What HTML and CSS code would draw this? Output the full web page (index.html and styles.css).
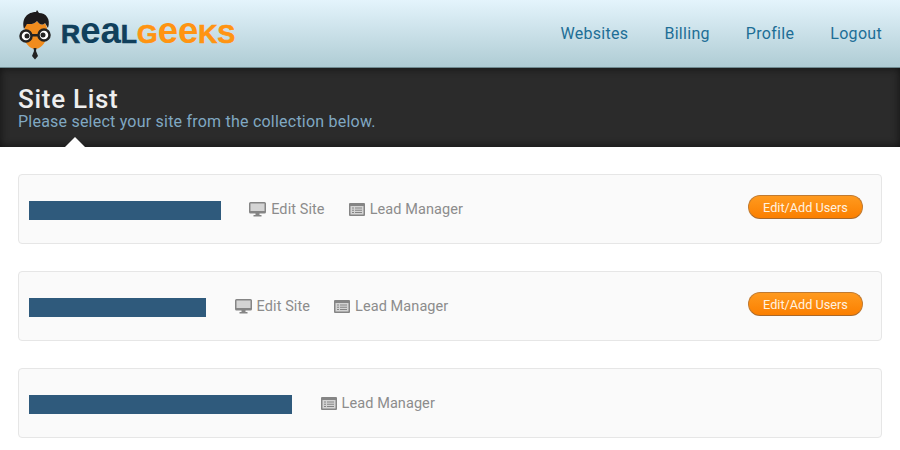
FILE: index.html
```html
<!DOCTYPE html>
<html lang="en">
<head>
  <meta charset="UTF-8">
  <title>Site List</title>
  <link rel="stylesheet" href="styles.css">
</head>
<body>

  <header class="topbar">
    <a class="logo" href="#">
      <svg class="logo-mark" width="34" height="50" viewBox="0 0 34 50">
        <path d="M6 16 L8 14 C10 14 15 15 18 11 C20 14 23 16 26 13 L28 18 L27 30 C24 36 20 39 16 39 C12 39 8 35 5 30 Z" fill="#f08c1e"/>
        <path d="M5 19 C2 8 9 2 17 2 L18 0 L20 3 C27 3 32 9 29 18 L26 13 C23 16 20 14 18 11 C15 15 10 14 8 14 Z" fill="#1d1b1c"/>
        <rect x="11" y="24" width="10" height="2.500" fill="#222"/>
        <circle cx="7" cy="26" r="5.500" fill="#fff" stroke="#222" stroke-width="2.500"/>
        <circle cx="25" cy="25" r="5.500" fill="#fff" stroke="#222" stroke-width="2.500"/>
        <circle cx="8" cy="26" r="2.500" fill="#222"/>
        <circle cx="24" cy="25" r="2.500" fill="#222"/>
        <path d="M14.500 38 L17.500 38 L17 41 L19 46 L16 49.500 L13 46 L15 41 Z" fill="#222"/>
      </svg>
      <span class="logo-text"><span class="logo-cap">R</span>ea<span class="logo-cap">L</span><span class="logo-accent"><span class="logo-cap">G</span>ee<span class="logo-cap">KS</span></span></span>
    </a>
    <nav class="nav">
      <a href="#">Websites</a>
      <a href="#">Billing</a>
      <a href="#">Profile</a>
      <a href="#">Logout</a>
    </nav>
  </header>

  <section class="banner">
    <h1>Site List</h1>
    <p>Please select your site from the collection below.</p>
    <span class="banner-arrow"></span>
  </section>

  <main class="sites">
    <div class="site">
      <span class="site-name" style="width: 192px"></span>
      <a class="site-link" href="#">
        <svg class="icon" width="17" height="15" viewBox="0 0 17 15"><rect x="1" y="1" width="15" height="9" fill="#d4d4d4"/><path d="M1.500 0H15.500A1.500 1.500 0 0 1 17 1.500V10A1.500 1.500 0 0 1 15.500 11.500H1.500A1.500 1.500 0 0 1 0 10V1.500A1.500 1.500 0 0 1 1.500 0ZM1.500 1.500V9H15.500V1.500ZM6.500 11.500H10.500V13H12.500V14.500H4.500V13H6.500Z" fill-rule="evenodd"/></svg>
        Edit Site
      </a>
      <a class="site-link" href="#">
        <svg class="icon" width="16" height="13" viewBox="0 0 16 13"><rect x="1" y="3" width="14" height="9" fill="#d4d4d4"/><path d="M1 0H15A1 1 0 0 1 16 1V12A1 1 0 0 1 15 13H1A1 1 0 0 1 0 12V1A1 1 0 0 1 1 0ZM1.500 3V11.500H14.500V3ZM3 4.500H5V5.500H3ZM6 4.500H13V5.500H6ZM3 6.750H5V7.750H3ZM6 6.750H13V7.750H6ZM3 9H5V10H3ZM6 9H13V10H6Z" fill-rule="evenodd"/></svg>
        Lead Manager
      </a>
      <a class="users-btn" href="#">Edit/Add Users</a>
    </div>

    <div class="site">
      <span class="site-name" style="width: 177.400px"></span>
      <a class="site-link" href="#">
        <svg class="icon" width="17" height="15" viewBox="0 0 17 15"><rect x="1" y="1" width="15" height="9" fill="#d4d4d4"/><path d="M1.500 0H15.500A1.500 1.500 0 0 1 17 1.500V10A1.500 1.500 0 0 1 15.500 11.500H1.500A1.500 1.500 0 0 1 0 10V1.500A1.500 1.500 0 0 1 1.500 0ZM1.500 1.500V9H15.500V1.500ZM6.500 11.500H10.500V13H12.500V14.500H4.500V13H6.500Z" fill-rule="evenodd"/></svg>
        Edit Site
      </a>
      <a class="site-link" href="#">
        <svg class="icon" width="16" height="13" viewBox="0 0 16 13"><rect x="1" y="3" width="14" height="9" fill="#d4d4d4"/><path d="M1 0H15A1 1 0 0 1 16 1V12A1 1 0 0 1 15 13H1A1 1 0 0 1 0 12V1A1 1 0 0 1 1 0ZM1.500 3V11.500H14.500V3ZM3 4.500H5V5.500H3ZM6 4.500H13V5.500H6ZM3 6.750H5V7.750H3ZM6 6.750H13V7.750H6ZM3 9H5V10H3ZM6 9H13V10H6Z" fill-rule="evenodd"/></svg>
        Lead Manager
      </a>
      <a class="users-btn" href="#">Edit/Add Users</a>
    </div>

    <div class="site">
      <span class="site-name" style="width: 263.400px"></span>
      <a class="site-link" href="#">
        <svg class="icon" width="16" height="13" viewBox="0 0 16 13"><rect x="1" y="3" width="14" height="9" fill="#d4d4d4"/><path d="M1 0H15A1 1 0 0 1 16 1V12A1 1 0 0 1 15 13H1A1 1 0 0 1 0 12V1A1 1 0 0 1 1 0ZM1.500 3V11.500H14.500V3ZM3 4.500H5V5.500H3ZM6 4.500H13V5.500H6ZM3 6.750H5V7.750H3ZM6 6.750H13V7.750H6ZM3 9H5V10H3ZM6 9H13V10H6Z" fill-rule="evenodd"/></svg>
        Lead Manager
      </a>
    </div>
  </main>

</body>
</html>
```

FILE: styles.css
```css
html, body {
  height: 450px;
  overflow: hidden;
}

body {
  margin: 0;
  background: #fff;
  font-family: Roboto, Arial, sans-serif;
}

a {
  text-decoration: none;
}

.topbar {
  height: 67px;
  padding: 0 18px;
  display: flex;
  justify-content: space-between;
  align-items: center;
  background: linear-gradient(#e4f4fc, #afccd4);
  border-bottom: 1px solid #6f8a90;
}

.logo {
  display: flex;
  align-items: center;
  gap: 8px;
  margin-left: 1px;
}

.logo-mark {
  display: block;
  margin-top: 2px;
}

.logo-text {
  margin-top: -2px;
  font-family: "Liberation Sans", Arial, sans-serif;
  font-weight: 700;
  font-size: 36.600px;
  line-height: 40px;
  color: #10405c;
}

.logo-cap {
  font-size: 26.500px;
  -webkit-text-stroke: 0.7px currentColor;
}

.logo-accent {
  color: #ff9412;
}

.nav {
  display: flex;
  gap: 36px;
  margin-top: -1px;
}

.nav a {
  color: #1d6e96;
  font-size: 16px;
  letter-spacing: 0.3px;
}

.banner {
  position: relative;
  height: 79px;
  padding: 0 18px;
  background: #2b2b2b;
  box-shadow: inset 0 0 8px #111;
  overflow: hidden;
}

.banner h1 {
  margin: 0;
  padding-top: 15px;
  color: #eee;
  font-size: 26px;
  line-height: 32px;
  font-weight: 500;
  letter-spacing: 0.7px;
}

.banner p {
  margin: -3px 0 0;
  color: #80a8c2;
  font-size: 16px;
  line-height: 20px;
  letter-spacing: 0.22px;
}

.banner-arrow {
  position: absolute;
  left: 65px;
  bottom: 0;
  border-left: 10px solid transparent;
  border-right: 10px solid transparent;
  border-bottom: 10px solid #fff;
}

.sites {
  padding: 27px 18px 0;
  display: flex;
  flex-direction: column;
  gap: 27px;
}

.site {
  height: 68px;
  padding: 0 18px 0 10px;
  display: flex;
  align-items: center;
  background: #fafafa;
  border: 1px solid #e6e6e6;
  border-radius: 4px;
}

.site-name {
  height: 19px;
  margin-top: 3px;
  margin-right: 28.200px;
  background: #2f5a7c;
}

.site-link {
  display: flex;
  align-items: center;
  gap: 5px;
  margin-right: 24px;
  color: #8c8c8c;
  font-size: 14.500px;
  letter-spacing: 0.08px;
}

.icon {
  fill: #858585;
}

.users-btn {
  margin-left: auto;
  margin-top: -4px;
  width: 115px;
  height: 24px;
  line-height: 23px;
  text-align: center;
  box-sizing: border-box;
  color: #fff2e0;
  font-size: 12.700px;
  background: linear-gradient(#ff9a1e, #fb7f00);
  border: 1px solid #c07a30;
  border-bottom-color: #a8682a;
  border-radius: 12px;
}
```
